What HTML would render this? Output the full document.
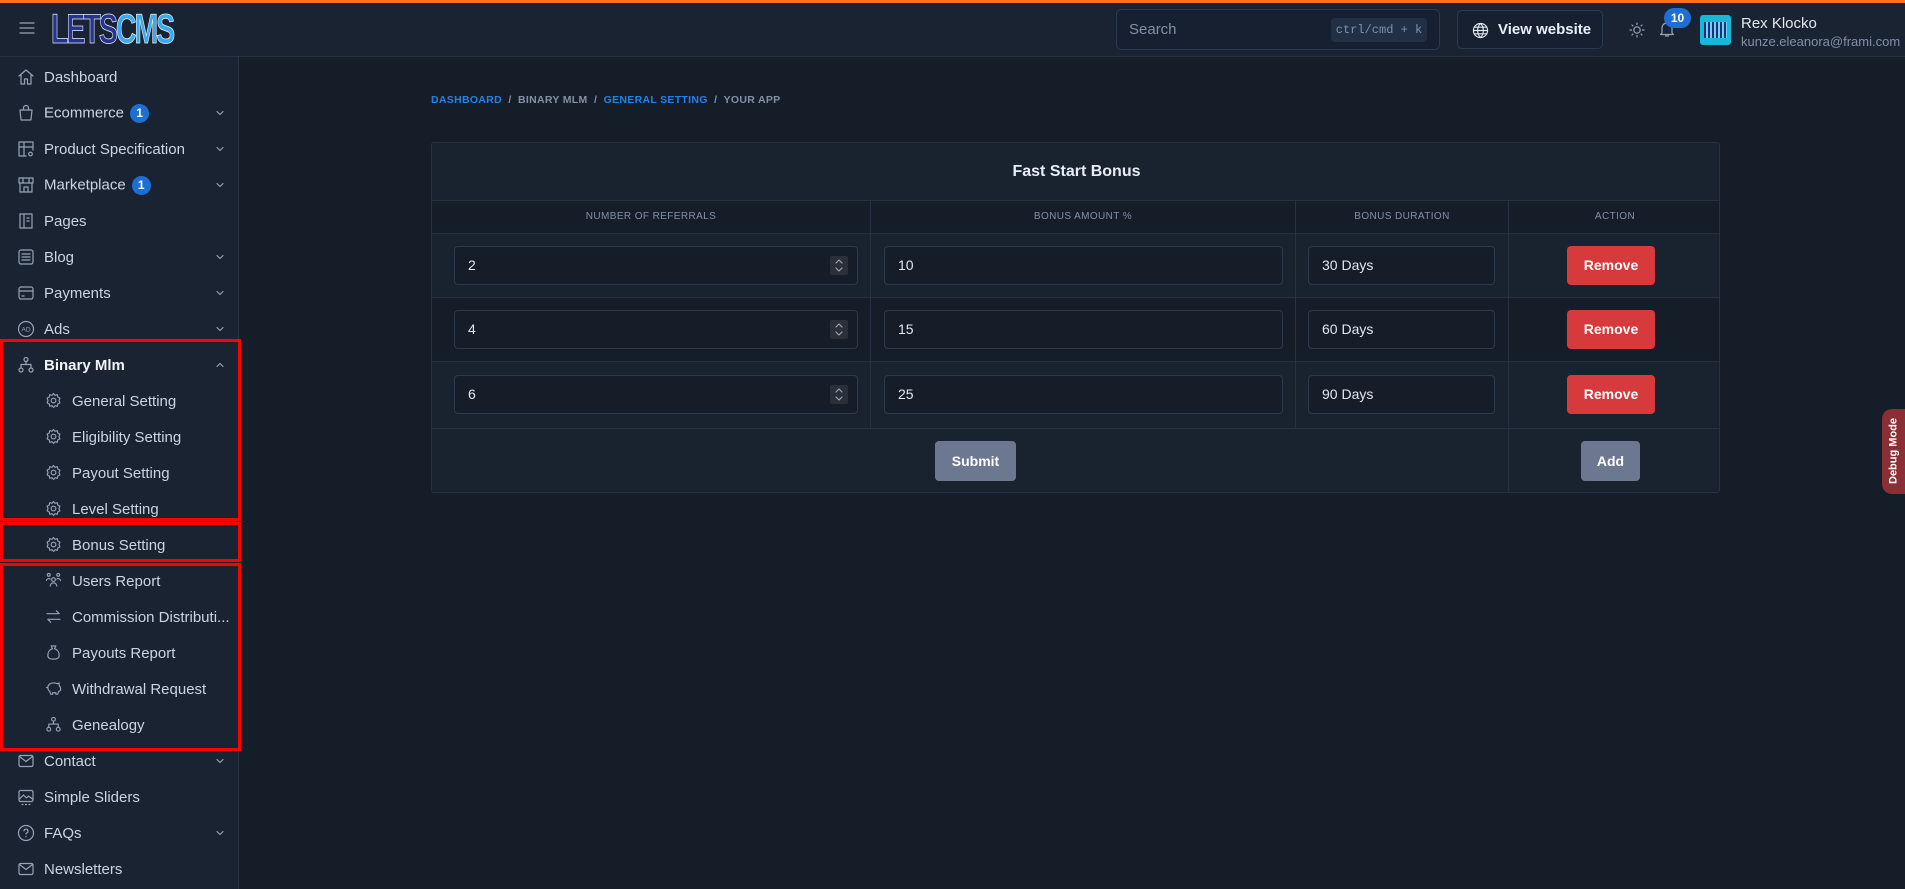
<!DOCTYPE html>
<html><head><meta charset="utf-8"><style>
*{box-sizing:border-box;margin:0;padding:0}
body{width:1905px;height:889px;overflow:hidden;background:#151d29;font-family:"Liberation Sans",sans-serif;color:#cbd5e1;position:relative}
.abs{position:absolute}
.top{left:0;top:0;width:1905px;height:3px;background:#f97316}
.hdr{left:0;top:3px;width:1905px;height:54px;background:#1a2332;border-bottom:1px solid #263244}
.side{left:0;top:57px;width:239px;height:832px;background:#1a2332;border-right:1px solid #263244}
.it{position:absolute;left:0;width:239px;height:36px;display:flex;align-items:center;font-size:15px;color:#cbd5e1}
.it .ic{position:absolute;left:17px;top:9px;width:18px;height:18px}
.it .tx{position:absolute;left:44px}
.it.sub .ic{left:45px;width:17px;height:17px}
.it.sub .tx{left:72px}
.chev{position:absolute;left:214px;top:12px;width:12px;height:12px}
.badge{display:inline-block;background:#1d6fd6;color:#fff;font-size:12px;font-weight:bold;width:19px;height:19px;border-radius:50%;text-align:center;line-height:19px;margin-left:6px;vertical-align:middle}
.rb{border:3px solid #ff0000;position:absolute}
svg{stroke:#97a3b5;fill:none;stroke-width:1.2;stroke-linecap:round;stroke-linejoin:round}
.card{left:431px;top:142px;width:1289px;height:351px;border:1px solid #263244;border-radius:3px;background:#19222f;overflow:hidden}
.row{position:absolute;left:0;width:1289px;border-top:1px solid #263244}
.vl{position:absolute;top:57px;width:1px;height:228px;background:#263244}
.th{position:absolute;top:57px;height:33px;line-height:33px;text-align:center;font-size:10px;letter-spacing:.4px;color:#8290a6}
.inp{position:absolute;height:39px;border:1px solid #2c3a4e;border-radius:4px;background:#151d29;color:#e2e8f0;font-size:14px;line-height:37px;padding-left:13px}
.spin{position:absolute;right:9px;top:9px;width:18px;height:19px;background:#2a2f3a;border-radius:2px}
.spin svg{position:absolute;left:4px;top:2px;stroke:#9aa5b5;stroke-width:1.2}
.btn{position:absolute;border-radius:4px;color:#fff;font-size:14px;font-weight:bold;text-align:center;line-height:39px;height:39px}
.red{background:#d63a3d}
.gray{background:#6b7890;line-height:40px;height:40px}
</style></head><body>
<div class="abs top"></div>
<div class="abs hdr">
  <svg class="abs" style="left:19px;top:18px" width="16" height="14" viewBox="0 0 16 14"><path d="M1 2h14M1 7h14M1 12h14"/></svg>
  <div class="abs" style="left:51px;top:3px;font-family:'Liberation Sans';font-weight:bold;font-size:42px;letter-spacing:-3px;transform:scaleX(0.68);transform-origin:left;line-height:46px;-webkit-text-stroke:0.8px #e8eef7"><span style="color:#26348f">LETS</span><span style="color:#3aaaf0">CMS</span></div>
  <div class="abs" style="left:1116px;top:6px;width:324px;height:41px;border:1px solid #2c3a4e;border-radius:5px;background:#172030">
    <span class="abs" style="left:12px;top:11px;font-size:15px;color:#8290a6">Search</span>
    <span class="abs" style="left:214px;top:8px;width:96px;height:24px;background:#223046;border-radius:4px;font-family:'Liberation Mono';font-size:12px;color:#8290a6;text-align:center;line-height:24px">ctrl/cmd + k</span>
  </div>
  <div class="abs" style="left:1457px;top:7px;width:146px;height:39px;border:1px solid #2c3a4e;border-radius:5px;background:#172030">
    <svg class="abs" style="left:14px;top:11px" width="17" height="17" viewBox="0 0 18 18"><circle cx="9" cy="9" r="7.5" stroke="#e2e8f0"/><path d="M1.5 9h15M9 1.5c-4 4-4 11 0 15M9 1.5c4 4 4 11 0 15M2.5 5.5h13M2.5 12.5h13" stroke="#e2e8f0"/></svg>
    <span class="abs" style="left:40px;top:10px;font-size:15px;font-weight:bold;color:#e8eef7">View website</span>
  </div>
  <svg class="abs" style="left:1629px;top:19px" width="16" height="16" viewBox="0 0 16 16"><circle cx="8" cy="8" r="3.2"/><path d="M8 1v1.5M8 13.5V15M1 8h1.5M13.5 8H15M3 3l1 1M12 12l1 1M3 13l1-1M12 4l1-1"/></svg>
  <svg class="abs" style="left:1659px;top:17px" width="16" height="18" viewBox="0 0 16 18"><path d="M3 13V8a5 5 0 0 1 10 0v5l1.5 1.5h-13z M6.5 16h3"/></svg>
  <div class="abs" style="left:1664px;top:5px;width:27px;height:20px;border-radius:10px;background:#1d6fd6;color:#fff;font-size:12px;font-weight:bold;text-align:center;line-height:20px">10</div>
  <div class="abs" style="left:1700px;top:12px;width:31px;height:30px;background:#16b7d8;border-radius:3px"><div style="margin:7px 4px;height:16px;background:repeating-linear-gradient(90deg,#1f2f7a 0 2px,#6fd0f0 2px 4px)"></div></div>
  <div class="abs" style="left:1741px;top:12px;font-size:15px;color:#e2e8f0">Rex Klocko</div>
  <div class="abs" style="left:1741px;top:31px;font-size:13px;color:#8290a6">kunze.eleanora@frami.com</div>
</div>

<div class="abs side"></div>
<div class="abs" style="left:0;top:0">
<div class="it" style="top:59px"><svg class="ic" viewBox="0 0 18 18"><path d="M2 8l7-6 7 6M4 6.5V16h3.5v-5h3v5H14V6.5"/></svg><span class="tx">Dashboard</span></div>
<div class="it" style="top:95px"><svg class="ic" viewBox="0 0 18 18"><path d="M3 6h12l-1 10H4z M6.5 6V4a2.5 2.5 0 0 1 5 0v2"/></svg><span class="tx">Ecommerce<span class="badge">1</span></span><svg class="chev" viewBox="0 0 12 12"><path d="M3 4.5l3 3 3-3"/></svg></div>
<div class="it" style="top:131px"><svg class="ic" viewBox="0 0 18 18"><path d="M9 16H2V2h14v8M2 7h14M7 2v14"/><circle cx="13.5" cy="14" r="1.8"/></svg><span class="tx">Product Specification</span><svg class="chev" viewBox="0 0 12 12"><path d="M3 4.5l3 3 3-3"/></svg></div>
<div class="it" style="top:167px"><svg class="ic" viewBox="0 0 18 18"><path d="M2 2h14v5H2z M3 7v9h12V7 M7 16v-5h4v5 M6 2v5M12 2v5"/></svg><span class="tx">Marketplace<span class="badge">1</span></span><svg class="chev" viewBox="0 0 12 12"><path d="M3 4.5l3 3 3-3"/></svg></div>
<div class="it" style="top:203px"><svg class="ic" viewBox="0 0 18 18"><path d="M3 2h12v14H3z M7 2v14 M10 6h2M10 9h2"/></svg><span class="tx">Pages</span></div>
<div class="it" style="top:239px"><svg class="ic" viewBox="0 0 18 18"><rect x="2" y="2" width="14" height="14" rx="2"/><path d="M5 6h8M5 9h8M5 12h8"/></svg><span class="tx">Blog</span><svg class="chev" viewBox="0 0 12 12"><path d="M3 4.5l3 3 3-3"/></svg></div>
<div class="it" style="top:275px"><svg class="ic" viewBox="0 0 18 18"><rect x="2" y="3" width="14" height="12" rx="2"/><path d="M2 7h14M5 12h2"/></svg><span class="tx">Payments</span><svg class="chev" viewBox="0 0 12 12"><path d="M3 4.5l3 3 3-3"/></svg></div>
<div class="it" style="top:311px"><svg class="ic" viewBox="0 0 18 18"><circle cx="9" cy="9" r="7.5"/><text x="9" y="11.5" font-size="6.5" text-anchor="middle" fill="#97a3b5" stroke="none" font-family="Liberation Sans">AD</text></svg><span class="tx">Ads</span><svg class="chev" viewBox="0 0 12 12"><path d="M3 4.5l3 3 3-3"/></svg></div>
<div class="it" style="top:347px"><svg class="ic" viewBox="0 0 18 18"><circle cx="9" cy="3.5" r="2"/><circle cx="4" cy="14" r="2"/><circle cx="14" cy="14" r="2"/><path d="M9 5.5v3M4 12v-3.5h10V12"/></svg><span class="tx" style="color:#f1f5f9;font-weight:bold">Binary Mlm</span><svg class="chev" viewBox="0 0 12 12"><path d="M3 7.5l3-3 3 3"/></svg></div>
</div>
<div class="abs" style="left:0;top:0">
<div class="it sub" style="top:383px"><svg class="ic" viewBox="0 0 18 18"><circle cx="9" cy="9" r="2.5"/><path d="M9 1.5l1.5 2 2.5-.7.5 2.5 2.3 1.2-1 2.5 1 2.5-2.3 1.2-.5 2.5-2.5-.7L9 16.5l-1.5-2-2.5.7-.5-2.5-2.3-1.2 1-2.5-1-2.5 2.3-1.2.5-2.5 2.5.7z"/></svg><span class="tx">General Setting</span></div>
<div class="it sub" style="top:419px"><svg class="ic" viewBox="0 0 18 18"><circle cx="9" cy="9" r="2.5"/><path d="M9 1.5l1.5 2 2.5-.7.5 2.5 2.3 1.2-1 2.5 1 2.5-2.3 1.2-.5 2.5-2.5-.7L9 16.5l-1.5-2-2.5.7-.5-2.5-2.3-1.2 1-2.5-1-2.5 2.3-1.2.5-2.5 2.5.7z"/></svg><span class="tx">Eligibility Setting</span></div>
<div class="it sub" style="top:455px"><svg class="ic" viewBox="0 0 18 18"><circle cx="9" cy="9" r="2.5"/><path d="M9 1.5l1.5 2 2.5-.7.5 2.5 2.3 1.2-1 2.5 1 2.5-2.3 1.2-.5 2.5-2.5-.7L9 16.5l-1.5-2-2.5.7-.5-2.5-2.3-1.2 1-2.5-1-2.5 2.3-1.2.5-2.5 2.5.7z"/></svg><span class="tx">Payout Setting</span></div>
<div class="it sub" style="top:491px"><svg class="ic" viewBox="0 0 18 18"><circle cx="9" cy="9" r="2.5"/><path d="M9 1.5l1.5 2 2.5-.7.5 2.5 2.3 1.2-1 2.5 1 2.5-2.3 1.2-.5 2.5-2.5-.7L9 16.5l-1.5-2-2.5.7-.5-2.5-2.3-1.2 1-2.5-1-2.5 2.3-1.2.5-2.5 2.5.7z"/></svg><span class="tx">Level Setting</span></div>
<div class="it sub" style="top:527px"><svg class="ic" viewBox="0 0 18 18"><circle cx="9" cy="9" r="2.5"/><path d="M9 1.5l1.5 2 2.5-.7.5 2.5 2.3 1.2-1 2.5 1 2.5-2.3 1.2-.5 2.5-2.5-.7L9 16.5l-1.5-2-2.5.7-.5-2.5-2.3-1.2 1-2.5-1-2.5 2.3-1.2.5-2.5 2.5.7z"/></svg><span class="tx">Bonus Setting</span></div>
<div class="it sub" style="top:563px"><svg class="ic" viewBox="0 0 18 18"><circle cx="9" cy="8" r="2"/><circle cx="4" cy="3" r="1.5"/><circle cx="14" cy="3" r="1.5"/><path d="M5.5 15a3.5 3.5 0 0 1 7 0M1.5 9a2.5 2.5 0 0 1 4-1.5M16.5 9a2.5 2.5 0 0 0-4-1.5"/></svg><span class="tx">Users Report</span></div>
<div class="it sub" style="top:599px"><svg class="ic" viewBox="0 0 18 18"><path d="M2 6h13l-3-3M16 12H3l3 3"/></svg><span class="tx">Commission Distributi...</span></div>
<div class="it sub" style="top:635px"><svg class="ic" viewBox="0 0 18 18"><path d="M6.5 2h5l-1.5 3c3.5 1 5 4 5 7 0 3-2 4-6 4s-6-1-6-4c0-3 1.5-6 5-7z"/></svg><span class="tx">Payouts Report</span></div>
<div class="it sub" style="top:671px"><svg class="ic" viewBox="0 0 18 18"><path d="M3 8c0-3 3-5 6-5 2 0 3 .5 4 1l2-1v3c1 .8 1.5 1.8 1.5 3v2l-2 1-1 3h-2v-1.5H8V15H6l-1-3c-1.5-1-2-2.5-2-4zM3 8H1.5"/></svg><span class="tx">Withdrawal Request</span></div>
<div class="it sub" style="top:707px"><svg class="ic" viewBox="0 0 18 18"><circle cx="9" cy="3.5" r="2"/><circle cx="4" cy="14" r="2"/><circle cx="14" cy="14" r="2"/><path d="M9 5.5v3M4 12v-3.5h10V12"/></svg><span class="tx">Genealogy</span></div>
<div class="it" style="top:743px"><svg class="ic" viewBox="0 0 18 18"><rect x="2" y="3.5" width="14" height="11" rx="1.5"/><path d="M2.5 4.5l6.5 5 6.5-5"/></svg><span class="tx">Contact</span><svg class="chev" viewBox="0 0 12 12"><path d="M3 4.5l3 3 3-3"/></svg></div>
<div class="it" style="top:779px"><svg class="ic" viewBox="0 0 18 18"><rect x="2" y="2.5" width="14" height="11" rx="1.5"/><path d="M2.5 11l4-4 3 3 2-2 4 3M5 16.5h1M8.5 16.5h1M12 16.5h1"/></svg><span class="tx">Simple Sliders</span></div>
<div class="it" style="top:815px"><svg class="ic" viewBox="0 0 18 18"><circle cx="9" cy="9" r="7.5"/><path d="M7 7a2 2 0 1 1 2.5 2c-.4.2-.5.6-.5 1M9 12.5v.3"/></svg><span class="tx">FAQs</span><svg class="chev" viewBox="0 0 12 12"><path d="M3 4.5l3 3 3-3"/></svg></div>
<div class="it" style="top:851px"><svg class="ic" viewBox="0 0 18 18"><rect x="2" y="3.5" width="14" height="11" rx="1.5"/><path d="M2.5 4.5l6.5 5 6.5-5"/></svg><span class="tx">Newsletters</span></div>
</div>
<div class="rb" style="left:0;top:339px;width:241px;height:182px"></div>
<div class="rb" style="left:0;top:522px;width:241px;height:40px"></div>
<div class="rb" style="left:0;top:563px;width:241px;height:188px"></div>

<div class="abs" style="left:431px;top:94px;font-size:10.5px;font-weight:bold;letter-spacing:.3px;color:#8290a6"><span style="color:#1d84f0">DASHBOARD</span> &nbsp;/&nbsp; BINARY MLM &nbsp;/&nbsp; <span style="color:#1d84f0">GENERAL SETTING</span> &nbsp;/&nbsp; YOUR APP</div>

<div class="abs card">
  <div class="abs" style="left:0;top:0;width:1289px;height:57px;text-align:center;line-height:57px;font-size:16px;font-weight:bold;color:#e8eef7">Fast Start Bonus</div>
  <div class="row" style="top:57px;height:33px;background:#151d29"></div>
  <div class="row" style="top:90px;height:64px;background:#19222f"></div>
  <div class="row" style="top:154px;height:64px;background:#151d29"></div>
  <div class="row" style="top:218px;height:67px;background:#19222f"></div>
  <div class="row" style="top:285px;height:66px;background:#19222f"></div>
  <div class="vl" style="left:438px"></div>
  <div class="vl" style="left:863px"></div>
  <div class="vl" style="left:1076px;height:294px"></div>
  <div class="th" style="left:0;width:438px">NUMBER OF REFERRALS</div>
  <div class="th" style="left:439px;width:424px">BONUS AMOUNT %</div>
  <div class="th" style="left:864px;width:212px">BONUS DURATION</div>
  <div class="th" style="left:1077px;width:212px">ACTION</div>

  <div class="inp" style="left:22px;top:103px;width:404px">2<div class="spin"><svg width="10" height="15" viewBox="0 0 10 15"><path d="M2 5l3-3 3 3M2 10l3 3 3-3"/></svg></div></div>
  <div class="inp" style="left:452px;top:103px;width:399px">10</div>
  <div class="inp" style="left:876px;top:103px;width:187px">30 Days</div>
  <div class="btn red" style="left:1135px;top:103px;width:88px">Remove</div>

  <div class="inp" style="left:22px;top:167px;width:404px">4<div class="spin"><svg width="10" height="15" viewBox="0 0 10 15"><path d="M2 5l3-3 3 3M2 10l3 3 3-3"/></svg></div></div>
  <div class="inp" style="left:452px;top:167px;width:399px">15</div>
  <div class="inp" style="left:876px;top:167px;width:187px">60 Days</div>
  <div class="btn red" style="left:1135px;top:167px;width:88px">Remove</div>

  <div class="inp" style="left:22px;top:232px;width:404px">6<div class="spin"><svg width="10" height="15" viewBox="0 0 10 15"><path d="M2 5l3-3 3 3M2 10l3 3 3-3"/></svg></div></div>
  <div class="inp" style="left:452px;top:232px;width:399px">25</div>
  <div class="inp" style="left:876px;top:232px;width:187px">90 Days</div>
  <div class="btn red" style="left:1135px;top:232px;width:88px">Remove</div>

  <div class="btn gray" style="left:503px;top:298px;width:81px">Submit</div>
  <div class="btn gray" style="left:1149px;top:298px;width:59px">Add</div>
</div>

<div class="abs" style="left:1882px;top:409px;width:30px;height:85px;background:#8b2f36;border-radius:10px 0 0 10px"></div>
<div class="abs" style="left:1851px;top:441px;width:85px;height:20px;transform:rotate(-90deg);color:#fff;font-size:11px;font-weight:bold;text-align:center;line-height:20px">Debug Mode</div>
</body></html>
